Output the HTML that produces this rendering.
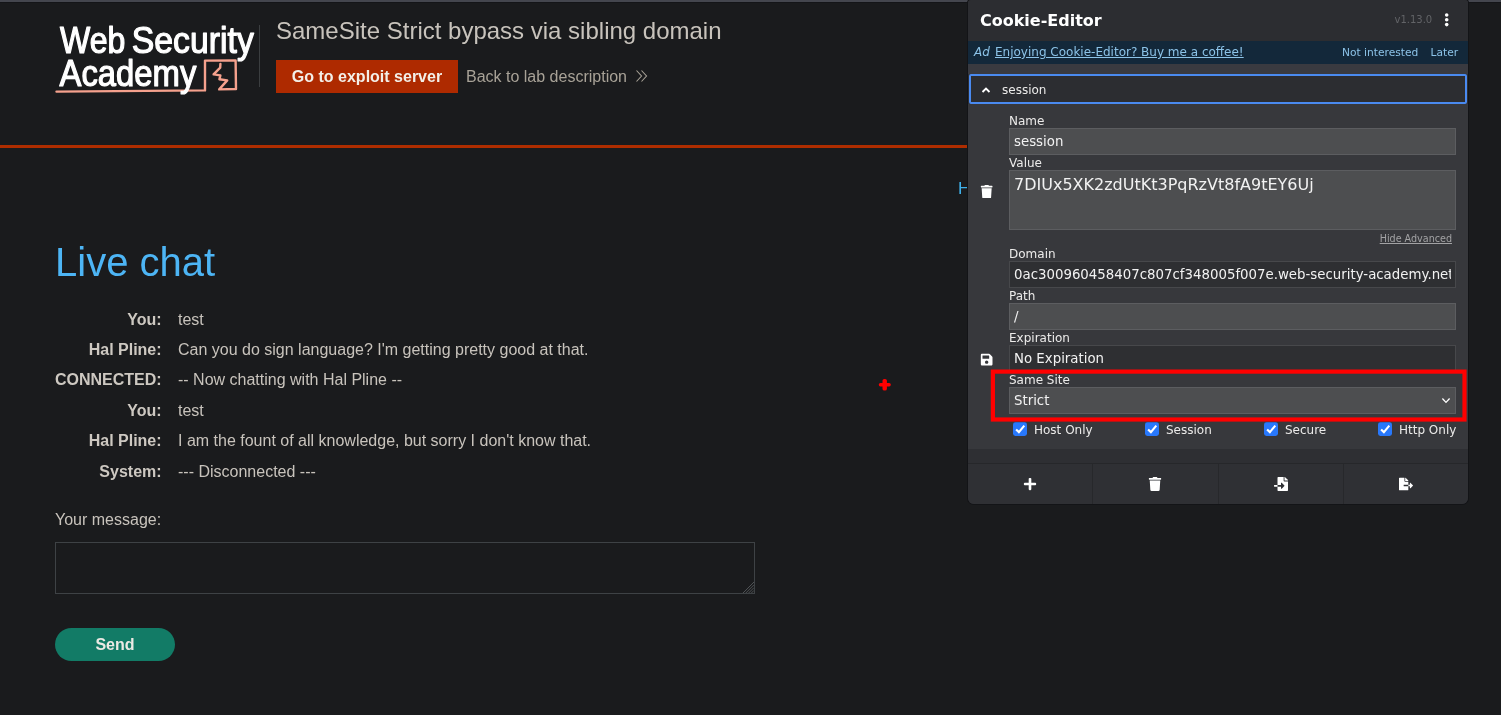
<!DOCTYPE html>
<html lang="en">
<head>
<meta charset="utf-8">
<title>SameSite Strict bypass via sibling domain</title>
<style>
*{box-sizing:border-box;margin:0;padding:0}
html,body{width:1501px;height:715px;overflow:hidden;background:#1a1b1d}
body{position:relative;font-family:"Liberation Sans",Arial,sans-serif;color:#c8c3bc;font-size:16px}
.abs{position:absolute;white-space:nowrap}
#topstrip{left:0;top:0;width:1501px;height:2px;background:#44464e;box-shadow:0 1px 0 #141518}
#logo{left:50px;top:15px}
#vsep{left:259px;top:25px;width:1px;height:62px;background:#3b3e40}
#title{left:276px;top:15px;font-size:24px;line-height:32px;color:#c8c3bc}
#exploit{left:276px;top:60px;width:182px;height:33px;background:#ae2a00;color:#f3efe8;font-weight:bold;font-size:16px;line-height:33px;text-align:center}
#back{left:466px;top:60px;line-height:33px;color:#a8a297;font-size:16px}
#chev{left:634px;top:68px}
#redline{left:0;top:145px;width:968px;height:3px;background:#ae2d00}
#home{left:958px;top:177px;line-height:24px;color:#3fb0ea;width:9px;height:24px;overflow:hidden}
#home span{display:inline-block;transform:scaleX(1.07);transform-origin:0 0}
#h1{left:55px;top:236px;font-size:40px;line-height:52px;color:#4db5f5;font-weight:normal}
.lbl{left:0;width:161.6px;text-align:right;font-weight:bold;line-height:24px;color:#cdc8c1}
.msg{left:178px;line-height:24px;color:#c8c3bc}
#yourmsg{left:55px;top:508px;line-height:24px}
#ta{left:55px;top:542px;width:700px;height:52px;border:1px solid #3e4245;background:#1a1b1d}
#send{left:55px;top:628px;width:120px;height:33px;border-radius:17px;background:#127b66;color:#ece9e4;font-weight:bold;line-height:33px;text-align:center}
#cursor{left:878px;top:378px}

/* popup */
#pop{left:968px;top:0;width:500px;height:504px;background:#2e2f33;border-radius:3px 3px 6px 6px;overflow:hidden;font-family:"DejaVu Sans","Liberation Sans",sans-serif;color:#ecebea;box-shadow:0 0 0 1px #131417}
#pop .abs{position:absolute}
#phead{left:0;top:0;width:500px;height:41px;background:#2c2d31}
#ptitle{left:12px;top:11px;font-weight:bold;font-size:16px;line-height:20px;color:#fff}
#pver{left:426.5px;top:13px;font-size:10px;line-height:14px;color:#626367}
#adbar{left:0;top:41px;width:500px;height:23px;background:#13283a}
#ad1{left:6px;top:4px;font-size:12px;line-height:14px;font-style:italic;color:#8cc3e8}
#ad2{left:27px;top:4px;font-size:12px;line-height:14px;color:#8cc3e8;text-decoration:underline}
#ad3{left:374px;top:5px;font-size:10.667px;line-height:14px;color:#8cc3e8}
#ad4{left:462.5px;top:5px;font-size:10.667px;line-height:14px;color:#8cc3e8}
#gap1{left:0;top:64px;width:500px;height:10px;background:#393a40}
#crow{left:1px;top:74px;width:498px;height:30px;background:#2c2d31;border:2px solid #4a8af0;border-radius:2px}
#cname{left:34px;top:83px;font-size:12px;line-height:15px;color:#ecebea}
#cbody{left:0;top:104px;width:500px;height:345px;background:#37383c}
.fl{left:41px;font-size:12px;line-height:15px;color:#ecebea}
.fi{left:41px;width:447px;height:27px;border:1px solid #5c5d60;background:#4d4e50;font-size:13.333px;line-height:15px;padding:5px 4px;color:#f2f2f2}
.fi>span{display:block;overflow:hidden;white-space:nowrap}
.fi.dark{background:#2e2f32;border-color:#47484b}
#hideadv{right:16px;top:232px;font-size:9.6px;line-height:13px;color:#a2a2a4;text-decoration:underline}
.cbx{top:423px;width:13px;height:13px;border-radius:2px;background:#1f7bf2}
.cbl{top:423px;font-size:12px;line-height:15px;color:#ecebea}
#redbox{left:23px;top:369px;width:476px;height:52px;border:4px solid #ff0000}
#tbar{left:0;top:463px;width:500px;height:41px;background:#2f3034;border-top:1px solid #26272a}
.tsep{top:464px;width:1px;height:40px;background:#27282b}
</style>
</head>
<body>
<div id="root" style="position:absolute;left:0;top:0;width:1501px;height:715px;will-change:transform">
<div class="abs" id="topstrip"></div>

<svg class="abs" id="logo" width="210" height="85" viewBox="50 15 210 85">
  <path d="M56.5 91.6 L205 90.4 L205 60.6 L235.6 60.4 L236 89 L219.2 89.4 L227.2 80.4 L219.4 79.2 L220.4 75.4 L213.6 74.4 L220.2 67.6 L220.4 64" fill="none" stroke="#f5a18d" stroke-width="2.4" stroke-linejoin="round" stroke-linecap="round"/>
  <g fill="#ffffff" stroke="#ffffff" stroke-width="1.2" stroke-linejoin="round" font-family="'Liberation Sans',Arial,sans-serif">
    <text x="60.1" y="53.4" font-size="36.5" textLength="65.3" lengthAdjust="spacingAndGlyphs">Web</text>
    <text x="131.8" y="53.4" font-size="36.5" textLength="122" lengthAdjust="spacingAndGlyphs">Security</text>
    <text x="59.6" y="85.6" font-size="36" textLength="136.7" lengthAdjust="spacingAndGlyphs">Academy</text>
  </g>
</svg>
<div class="abs" id="vsep"></div>
<div class="abs" id="title">SameSite Strict bypass via sibling domain</div>
<div class="abs" id="exploit">Go to exploit server</div>
<div class="abs" id="back">Back to lab description</div>
<svg class="abs" id="chev" width="16" height="16" viewBox="0 0 16 16"><path d="M2.5 2.5 L7.5 8 L2.5 13.5 M7.5 2.5 L12.5 8 L7.5 13.5" fill="none" stroke="#a8a297" stroke-width="1.1"/></svg>
<div class="abs" id="redline"></div>
<div class="abs" id="home"><span>Home</span></div>

<h1 class="abs" id="h1">Live chat</h1>
<div class="abs lbl" style="top:308px">You:</div><div class="abs msg" style="top:308px">test</div>
<div class="abs lbl" style="top:338px">Hal Pline:</div><div class="abs msg" style="top:338px">Can you do sign language? I'm getting pretty good at that.</div>
<div class="abs lbl" style="top:368px">CONNECTED:</div><div class="abs msg" style="top:368px">-- Now chatting with Hal Pline --</div>
<div class="abs lbl" style="top:399px">You:</div><div class="abs msg" style="top:399px">test</div>
<div class="abs lbl" style="top:429px">Hal Pline:</div><div class="abs msg" style="top:429px">I am the fount of all knowledge, but sorry I don't know that.</div>
<div class="abs lbl" style="top:460px">System:</div><div class="abs msg" style="top:460px">--- Disconnected ---</div>
<div class="abs" id="yourmsg">Your message:</div>
<div class="abs" id="ta"></div>
<svg class="abs" style="left:742px;top:581px" width="12" height="12" viewBox="0 0 12 12"><path d="M12 1 L1 12 M12 3.8 L3.8 12 M12 6.6 L6.6 12 M12 9.4 L9.4 12" fill="none" stroke="#5c6062" stroke-width="0.8"/></svg>
<div class="abs" id="send">Send</div>
<svg class="abs" id="cursor" width="14" height="14" viewBox="878 378 14 14"><rect x="878.8" y="383" width="12" height="3.4" rx="1.6" fill="#ff0000"/><rect x="882.5" y="378.9" width="4.4" height="11.7" rx="1.9" fill="#ff0000"/></svg>

<div class="abs" id="pop">
  <div class="abs" id="phead"></div>
  <div class="abs" id="ptitle">Cookie-Editor</div>
  <div class="abs" id="pver">v1.13.0</div>
  <svg class="abs" style="left:474px;top:12px" width="10" height="16" viewBox="0 0 10 16"><circle cx="4.7" cy="3" r="1.8" fill="#fff"/><circle cx="4.7" cy="7.8" r="1.8" fill="#fff"/><circle cx="4.7" cy="12.6" r="1.8" fill="#fff"/></svg>
  <div class="abs" id="adbar">
    <div class="abs" id="ad1">Ad</div>
    <div class="abs" id="ad2">Enjoying Cookie-Editor? Buy me a coffee!</div>
    <div class="abs" id="ad3">Not interested</div>
    <div class="abs" id="ad4">Later</div>
  </div>
  <div class="abs" id="gap1"></div>
  <div class="abs" id="cbody"></div>
  <div class="abs" id="crow"></div>
  <svg class="abs" style="left:13px;top:86px" width="10" height="8" viewBox="0 0 10 8"><path d="M1.5 6 L5 2.5 L8.5 6" fill="none" stroke="#fff" stroke-width="1.9"/></svg>
  <div class="abs" id="cname">session</div>

  <div class="abs fl" style="top:114px">Name</div>
  <div class="abs fi" style="top:128px"><span>session</span></div>
  <div class="abs fl" style="top:156px">Value</div>
  <div class="abs fi" style="top:170px;height:60px;font-size:16px;line-height:19px;padding:4px 4px"><span>7DIUx5XK2zdUtKt3PqRzVt8fA9tEY6Uj</span></div>
  <div class="abs" id="hideadv">Hide Advanced</div>
  <div class="abs fl" style="top:247px">Domain</div>
  <div class="abs fi dark" style="top:261px"><span>0ac300960458407c807cf348005f007e.web-security-academy.net</span></div>
  <div class="abs fl" style="top:289px">Path</div>
  <div class="abs fi" style="top:303px"><span>/</span></div>
  <div class="abs fl" style="top:331px">Expiration</div>
  <div class="abs fi dark" style="top:345px"><span>No Expiration</span></div>
  <div class="abs fl" style="top:373px">Same Site</div>
  <div class="abs fi" style="top:387px"><span>Strict</span></div>
  <svg class="abs" style="left:473px;top:397px" width="10" height="8" viewBox="0 0 10 8"><path d="M1.4 1.5 L5 5.4 L8.6 1.5" fill="none" stroke="#fff" stroke-width="1.3"/></svg>

  <svg class="abs" style="left:45px;top:422px" width="14" height="14" viewBox="0 0 14 14"><rect x="0" y="0.2" width="14" height="13.7" rx="2.4" fill="#2878fc"/><path d="M3.1 7.4 L5.9 10.1 L11.3 3.6" fill="none" stroke="#fff" stroke-width="2.1"/></svg><div class="abs cbl" style="left:66px">Host Only</div>
  <svg class="abs" style="left:177px;top:422px" width="14" height="14" viewBox="0 0 14 14"><rect x="0" y="0.2" width="14" height="13.7" rx="2.4" fill="#2878fc"/><path d="M3.1 7.4 L5.9 10.1 L11.3 3.6" fill="none" stroke="#fff" stroke-width="2.1"/></svg><div class="abs cbl" style="left:198px">Session</div>
  <svg class="abs" style="left:296px;top:422px" width="14" height="14" viewBox="0 0 14 14"><rect x="0" y="0.2" width="14" height="13.7" rx="2.4" fill="#2878fc"/><path d="M3.1 7.4 L5.9 10.1 L11.3 3.6" fill="none" stroke="#fff" stroke-width="2.1"/></svg><div class="abs cbl" style="left:317px">Secure</div>
  <svg class="abs" style="left:410px;top:422px" width="14" height="14" viewBox="0 0 14 14"><rect x="0" y="0.2" width="14" height="13.7" rx="2.4" fill="#2878fc"/><path d="M3.1 7.4 L5.9 10.1 L11.3 3.6" fill="none" stroke="#fff" stroke-width="2.1"/></svg><div class="abs cbl" style="left:431px">Http Only</div>
  <svg class="abs" style="left:20px;top:366px" width="480" height="60" viewBox="988 366 480 60"><rect x="992.9" y="371.6" width="471.6" height="47.9" fill="none" stroke="#ff0000" stroke-width="4.2"/></svg>
  <div class="abs" id="tbar"></div>
  <div class="abs tsep" style="left:124px"></div>
  <div class="abs tsep" style="left:250px"></div>
  <div class="abs tsep" style="left:375px"></div>
  <svg class="abs" style="left:12.13px;top:185.03px" width="13.333" height="13.333" viewBox="0 0 448 512"><path fill="#fff" d="M432 32H312l-9.4-18.7A24 24 0 0 0 281.100 0H166.800a23.720 23.720 0 0 0-21.400 13.300L136 32H16A16 16 0 0 0 0 48v32a16 16 0 0 0 16 16h416a16 16 0 0 0 16-16V48a16 16 0 0 0-16-16zM53.200 467a48 48 0 0 0 47.900 45h245.800a48 48 0 0 0 47.900-45L416 128H32z"/></svg>
  <svg class="abs" style="left:12.13px;top:353.13px" width="13.333" height="13.333" viewBox="0 0 448 512"><path fill="#fff" d="M433.941 129.941l-83.882-83.882A48 48 0 0 0 316.118 32H48C21.490 32 0 53.490 0 80v352c0 26.510 21.490 48 48 48h352c26.510 0 48-21.490 48-48V163.882a48 48 0 0 0-14.059-33.941zM224 416c-35.346 0-64-28.654-64-64 0-35.346 28.654-64 64-64s64 28.654 64 64c0 35.346-28.654 64-64 64zm96-304.520V212c0 6.627-5.373 12-12 12H76c-6.627 0-12-5.373-12-12V108c0-6.627 5.373-12 12-12h228.520c3.183 0 6.235 1.264 8.485 3.515l3.480 3.480A11.996 11.996 0 0 1 320 111.480z"/></svg>
  <svg class="abs" style="left:55.0px;top:477.0px" width="14" height="14" viewBox="0 0 448 512"><path fill="#fff" d="M416 208H272V64c0-17.670-14.330-32-32-32h-32c-17.670 0-32 14.330-32 32v144H32c-17.670 0-32 14.330-32 32v32c0 17.670 14.330 32 32 32h144v144c0 17.670 14.330 32 32 32h32c17.670 0 32-14.330 32-32V304h144c17.670 0 32-14.330 32-32v-32c0-17.670-14.330-32-32-32z"/></svg>
  <svg class="abs" style="left:180.0px;top:477.0px" width="14" height="14" viewBox="0 0 448 512"><path fill="#fff" d="M432 32H312l-9.4-18.7A24 24 0 0 0 281.100 0H166.800a23.720 23.720 0 0 0-21.400 13.300L136 32H16A16 16 0 0 0 0 48v32a16 16 0 0 0 16 16h416a16 16 0 0 0 16-16V48a16 16 0 0 0-16-16zM53.200 467a48 48 0 0 0 47.900 45h245.800a48 48 0 0 0 47.900-45L416 128H32z"/></svg>
  <svg class="abs" style="left:306.0px;top:477.0px" width="14" height="14" viewBox="0 0 512 512"><path fill="#fff" d="M16 288c-8.800 0-16 7.200-16 16v32c0 8.800 7.200 16 16 16h112v-64zm489-183L407.100 7c-4.500-4.500-10.600-7-17-7H384v128h128v-6.100c0-6.300-2.500-12.400-7-16.900zm-153 31V0H152c-13.300 0-24 10.700-24 24v264h128v-65.200c0-14.300 17.300-21.400 27.400-11.300L379 308c6.600 6.700 6.600 17.400 0 24l-95.700 96.400c-10.100 10.100-27.400 3-27.400-11.300V352H128v136c0 13.300 10.700 24 24 24h336c13.300 0 24-10.700 24-24V160H376c-13.200 0-24-10.800-24-24z"/></svg>
  <svg class="abs" style="left:431.0px;top:477.0px" width="14" height="14" viewBox="0 0 576 512"><path fill="#fff" d="M384 121.900c0-6.300-2.500-12.400-7-16.900L279.100 7c-4.500-4.500-10.600-7-17-7H256v128h128zM571 308l-95.700-96.400c-10.100-10.100-27.400-3-27.400 11.300V288h-64v64h64v65.200c0 14.300 17.300 21.400 27.400 11.300L571 332c6.600-6.600 6.600-17.400 0-24zm-379 28v-32c0-8.800 7.200-16 16-16h176V160H248c-13.200 0-24-10.800-24-24V0H24C10.700 0 0 10.700 0 24v464c0 13.300 10.700 24 24 24h336c13.300 0 24-10.700 24-24V352H208c-8.800 0-16-7.200-16-16z"/></svg>
</div>
</div>
</body>
</html>
